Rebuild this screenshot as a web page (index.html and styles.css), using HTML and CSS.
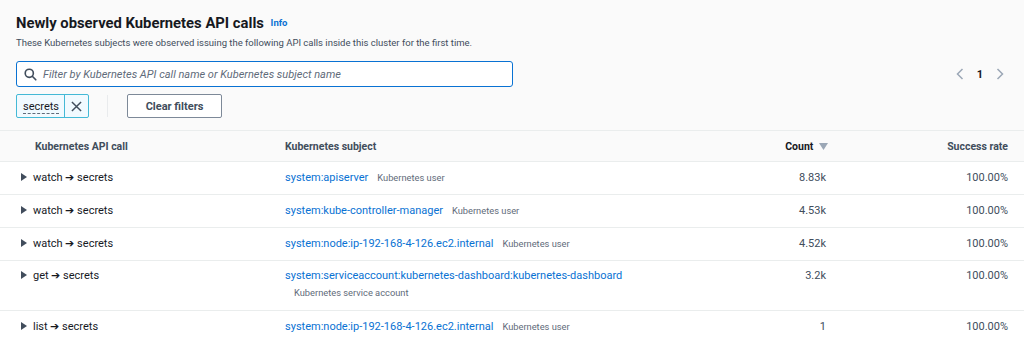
FILE: index.html
```html
<!DOCTYPE html>
<html>
<head>
<meta charset="utf-8">
<link rel="stylesheet" href="styles.css">
</head>
<body>
<div class="page">
  <header class="head">
    <h2 class="title">Newly observed Kubernetes API calls <a class="info">Info</a></h2>
    <p class="desc">These Kubernetes subjects were observed issuing the following API calls inside this cluster for the first time.</p>
  </header>
  <div class="filters">
    <div class="filter-left">
      <div class="search">
        <svg class="search-icon" width="13" height="13" viewBox="0 0 16 16"><circle cx="6.5" cy="6.5" r="5" fill="none" stroke="#414d5c" stroke-width="2"/><path d="M10.2 10.2 L14.5 14.5" stroke="#414d5c" stroke-width="2" stroke-linecap="round"/></svg>
        <span class="placeholder">Filter by Kubernetes API call name or Kubernetes subject name</span>
      </div>
      <div class="tokens">
        <div class="token">
          <span class="token-label">secrets</span>
          <span class="token-x"><svg width="11" height="11" viewBox="0 0 12 12"><path d="M1 1 L11 11 M11 1 L1 11" stroke="#414d5c" stroke-width="1.6"/></svg></span>
        </div>
        <span class="sep"></span>
        <button class="clear">Clear filters</button>
      </div>
    </div>
    <div class="pager">
      <svg width="8" height="12" viewBox="0 0 8 12"><path d="M6.5 1 L1.5 6 L6.5 11" fill="none" stroke="#9ba7b6" stroke-width="1.5"/></svg>
      <span class="page-num">1</span>
      <svg width="8" height="12" viewBox="0 0 8 12"><path d="M1.5 1 L6.5 6 L1.5 11" fill="none" stroke="#9ba7b6" stroke-width="1.5"/></svg>
    </div>
  </div>
  <table class="grid">
    <colgroup><col class="c1"><col class="c2"><col class="c3"><col class="c4"></colgroup>
    <thead>
      <tr>
        <th class="h1">Kubernetes API call</th>
        <th>Kubernetes subject</th>
        <th class="num"><span class="sorted">Count</span> <svg class="sort" width="9" height="7" viewBox="0 0 9 7"><path d="M0 0 H9 L4.5 7 Z" fill="#9ba7b6"/></svg></th>
        <th class="num last">Success rate</th>
      </tr>
    </thead>
    <tbody>
      <tr>
        <td><span class="caret"></span>watch ➔ secrets</td>
        <td><a class="link">system:apiserver</a><span class="kind">Kubernetes user</span></td>
        <td class="num val">8.83k</td>
        <td class="num last">100.00%</td>
      </tr>
      <tr>
        <td><span class="caret"></span>watch ➔ secrets</td>
        <td><a class="link">system:kube-controller-manager</a><span class="kind">Kubernetes user</span></td>
        <td class="num val">4.53k</td>
        <td class="num last">100.00%</td>
      </tr>
      <tr>
        <td><span class="caret"></span>watch ➔ secrets</td>
        <td><a class="link">system:node:ip-192-168-4-126.ec2.internal</a><span class="kind">Kubernetes user</span></td>
        <td class="num val">4.52k</td>
        <td class="num last">100.00%</td>
      </tr>
      <tr class="tall">
        <td><span class="caret"></span>get ➔ secrets</td>
        <td><a class="link">system:serviceaccount:kubernetes-dashboard:kubernetes-dashboard</a><span class="kind wrap">Kubernetes service account</span></td>
        <td class="num val">3.2k</td>
        <td class="num last">100.00%</td>
      </tr>
      <tr>
        <td><span class="caret"></span>list ➔ secrets</td>
        <td><a class="link">system:node:ip-192-168-4-126.ec2.internal</a><span class="kind">Kubernetes user</span></td>
        <td class="num val">1</td>
        <td class="num last">100.00%</td>
      </tr>
    </tbody>
  </table>
</div>
</body>
</html>
```

FILE: styles.css
```css
* { box-sizing: border-box; }
html, body { margin: 0; padding: 0; background: #fafafa; }
body {
  font-family: Roboto, "Open Sans", Arial, sans-serif;
  color: #16191f;
  font-size: 11px;
  width: 1024px;
  height: 343px;
  overflow: hidden;
}
.head { padding: 13px 16px 0 16px; }
.title {
  margin: 0;
  font-size: 14.8px;
  font-weight: 700;
  line-height: 20px;
  color: #16191f;
}
.info {
  font-size: 9.5px;
  font-weight: 700;
  color: #0972d3;
  margin-left: 3px;
  vertical-align: 2px;
}
.desc {
  margin: 3px 0 0 0;
  font-size: 9.5px;
  line-height: 14px;
  color: #414d5c;
}
.filters {
  display: flex;
  justify-content: space-between;
  padding: 11px 16px 0 16px;
}
.filter-left { display: flex; flex-direction: column; gap: 7px; }
.search {
  width: 497px;
  height: 26px;
  border: 1.5px solid #0972d3;
  border-radius: 3px;
  background: #fff;
  display: flex;
  align-items: center;
  padding-left: 7px;
  gap: 6px;
}
.placeholder {
  font-style: italic;
  color: #5f6b7a;
  font-size: 11px;
}
.tokens { display: flex; align-items: center; }
.token {
  display: flex;
  height: 24px;
  border: 1px solid #44b9d6;
  border-radius: 2px;
  background: #f1faff;
}
.token-label {
  padding: 0 5px 0 6px;
  display: flex;
  align-items: center;
  font-size: 11px;
  border-right: 1px solid #44b9d6;
  text-decoration: underline dashed #5f6b7a;
  text-underline-offset: 3px;
}
.token-x { width: 23px; display: flex; align-items: center; justify-content: center; }
.sep {
  width: 1px;
  height: 22px;
  background: #e9ebed;
  margin: 0 19px 0 18px;
}
.clear {
  height: 24px;
  width: 95px;
  border: 1px solid #7d8998;
  border-radius: 2px;
  background: #fff;
  font-family: inherit;
  font-size: 11px;
  font-weight: 700;
  color: #414d5c;
  padding: 0;
}
.pager {
  display: flex;
  align-items: center;
  gap: 13px;
  height: 26px;
  padding-right: 4px;
}
.page-num { font-weight: 700; font-size: 11px; }
.grid {
  margin-top: 12px;
  width: 1024px;
  border-collapse: collapse;
  table-layout: fixed;
}
.c1 { width: 270px; }
.c2 { width: 430px; }
.c3 { width: 140px; }
.c4 { width: 184px; }
thead th {
  background: #fafafa;
  border-top: 1px solid #eaeded;
  border-bottom: 1px solid #eaeded;
  height: 31px;
  text-align: left;
  font-size: 10.5px;
  font-weight: 700;
  color: #414d5c;
  padding: 0 0 0 15px;
}
thead th.h1 { padding-left: 35px; }
thead th.num { text-align: right; padding-right: 12px; }
thead th .sorted { color: #16191f; }
.sort { margin-left: 3px; vertical-align: 0; }
thead th.last { padding-right: 16px; }
tbody td {
  background: #fff;
  border-bottom: 1px solid #eaeded;
  height: 33px;
  font-size: 11px;
  padding: 0 0 2px 15px;
  color: #16191f;
  vertical-align: middle;
}
tbody tr:last-child td { border-bottom: none; }
tbody td:first-child { padding-left: 21px; }
tr.tall td { height: 50px; vertical-align: top; padding-top: 8px; }
.caret {
  display: inline-block;
  width: 0; height: 0;
  border-top: 4px solid transparent;
  border-bottom: 4px solid transparent;
  border-left: 6px solid #414d5c;
  margin-right: 6px;
  vertical-align: 0;
}
.link { color: #0972d3; }
.kind { color: #5f6b7a; font-size: 9.3px; margin-left: 9px; }
.kind.wrap { display: block; margin: 5px 0 0 9px; }
td.num { text-align: right; color: #414d5c; }
td.val { padding-right: 14px; }
td.last { padding-right: 16px; }
```
